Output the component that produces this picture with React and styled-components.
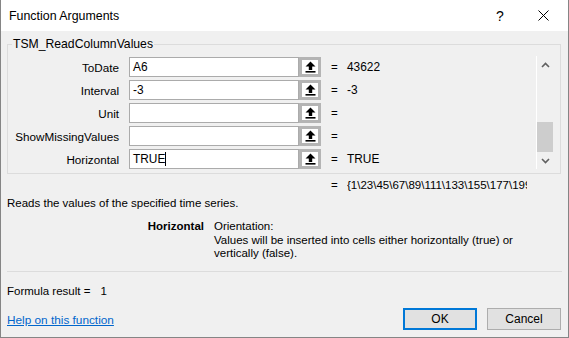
import styled, { createGlobalStyle } from "styled-components";

const GlobalStyle = createGlobalStyle`
  html, body {
    margin: 0;
    padding: 0;
    background: #ffffff;
  }
  body {
    font-family: "Liberation Sans", Arial, sans-serif;
    font-size: 11.5px;
    color: #000;
  }
`;

const args = [
  { name: "ToDate", value: "A6", result: "43622" },
  { name: "Interval", value: "-3", result: "-3" },
  { name: "Unit", value: "", result: "" },
  { name: "ShowMissingValues", value: "", result: "" },
  { name: "Horizontal", value: "TRUE", result: "TRUE", caret: true },
];

export default function App() {
  return (
    <>
      <GlobalStyle />
      <Window>
        <TitleBar>
          <Title>Function Arguments</Title>
          <HelpGlyph>?</HelpGlyph>
          <CloseButton>
            <svg width="11" height="11" viewBox="0 0 11 11">
              <path d="M0.5 0.5 L10.5 10.5 M10.5 0.5 L0.5 10.5" stroke="#000" strokeWidth="1" />
            </svg>
          </CloseButton>
        </TitleBar>

        <Body>
          <Group>
            <Legend>TSM_ReadColumnValues</Legend>
            <GroupInner>
              <Rows>
                {args.map((arg) => (
                  <Row key={arg.name}>
                    <ArgLabel>{arg.name}</ArgLabel>
                    <ArgInput>
                      {arg.value}
                      {arg.caret && <Caret />}
                    </ArgInput>
                    <CollapseButton>
                      <svg width="11" height="12" viewBox="0 0 11 12">
                        <path d="M5.5 0.5 L10.5 5.5 H7.2 V9 H3.8 V5.5 H0.5 Z" fill="#000" />
                        <rect x="0.5" y="10" width="10" height="1.6" fill="#000" />
                      </svg>
                    </CollapseButton>
                    <Equals>=</Equals>
                    <ArgResult>{arg.result}</ArgResult>
                  </Row>
                ))}
              </Rows>
              <ScrollBar>
                <Chevron>
                  <svg width="9" height="6" viewBox="0 0 9 6">
                    <path d="M1 5 L4.5 1.5 L8 5" stroke="#606060" strokeWidth="1.6" fill="none" />
                  </svg>
                </Chevron>
                <Track>
                  <Thumb />
                </Track>
                <Chevron>
                  <svg width="9" height="6" viewBox="0 0 9 6">
                    <path d="M1 1 L4.5 4.5 L8 1" stroke="#606060" strokeWidth="1.6" fill="none" />
                  </svg>
                </Chevron>
              </ScrollBar>
            </GroupInner>
          </Group>

          <ResultLine>
            <Equals>=</Equals>
            <ResultValue>{"{1\\23\\45\\67\\89\\111\\133\\155\\177\\199\\221\\243}"}</ResultValue>
          </ResultLine>

          <Description>Reads the values of the specified time series.</Description>

          <ParamHelp>
            <ParamName>Horizontal</ParamName>
            <ParamText>
              <span>Orientation:</span>
              <span>Values will be inserted into cells either horizontally (true) or</span>
              <span>vertically (false).</span>
            </ParamText>
          </ParamHelp>

          <Separator />

          <FormulaResult>
            Formula result =<FormulaValue>1</FormulaValue>
          </FormulaResult>

          <Footer>
            <HelpLink href="#">Help on this function</HelpLink>
            <Buttons>
              <DialogButton $primary>OK</DialogButton>
              <DialogButton>Cancel</DialogButton>
            </Buttons>
          </Footer>
        </Body>
      </Window>
    </>
  );
}

const Window = styled.div`
  width: 569px;
  height: 338px;
  box-sizing: border-box;
  border: 1px solid #858585;
  border-top: none;
  background: #f0f0f0;
  display: flex;
  flex-direction: column;
  overflow: hidden;
`;

const TitleBar = styled.div`
  height: 31px;
  background: #ffffff;
  display: flex;
  align-items: center;
  flex-shrink: 0;
`;

const Title = styled.div`
  flex: 1;
  padding-left: 8px;
  font-size: 12.4px;
`;

const HelpGlyph = styled.div`
  width: 14px;
  text-align: center;
  font-size: 14px;
  margin-right: 31px;
`;

const CloseButton = styled.div`
  width: 11px;
  height: 11px;
  display: flex;
  margin-right: 19px;
`;

const Body = styled.div`
  flex: 1;
  padding: 0 7px 0 6px;
  display: flex;
  flex-direction: column;
`;

const Group = styled.fieldset`
  margin: 6px 0 0 0;
  padding: 5px 7px 4px 0;
  border: 1px solid #dcdcdc;
  min-width: 0;
`;

const Legend = styled.legend`
  margin-left: 4px;
  padding: 0 1px;
  line-height: 14px;
  font-size: 12.2px;
`;

const GroupInner = styled.div`
  display: flex;
`;

const Rows = styled.div`
  flex: 1;
  display: flex;
  flex-direction: column;
  gap: 3px;
  padding-top: 1px;
`;

const Row = styled.div`
  display: flex;
  align-items: center;
  height: 20px;
`;

const ArgLabel = styled.div`
  width: 111px;
  text-align: right;
  font-size: 11.7px;
`;

const ArgInput = styled.div`
  width: 170px;
  height: 20px;
  box-sizing: border-box;
  margin-left: 10px;
  border: 1px solid #ababab;
  background: #ffffff;
  padding-left: 3px;
  display: flex;
  align-items: center;
  font-size: 11.9px;
`;

const Caret = styled.span`
  display: inline-block;
  width: 1px;
  height: 14px;
  background: #000;
`;

const CollapseButton = styled.div`
  width: 22px;
  height: 20px;
  box-sizing: border-box;
  border: 3px solid #b4b4b4;
  background: #ffffff;
  display: flex;
  align-items: center;
  justify-content: center;
`;

const Equals = styled.div`
  width: 16px;
  margin-left: 10px;
  flex-shrink: 0;
`;

const ArgResult = styled.div`
  font-size: 11.9px;
`;

const ScrollBar = styled.div`
  width: 16px;
  border-left: 1px solid #ffffff;
  display: flex;
  flex-direction: column;
  align-items: stretch;
`;

const Chevron = styled.div`
  height: 17px;
  display: flex;
  align-items: center;
  justify-content: center;
`;

const Track = styled.div`
  flex: 1;
  display: flex;
  flex-direction: column;
  justify-content: flex-end;
`;

const Thumb = styled.div`
  height: 30px;
  background: #cdcdcd;
`;

const ResultLine = styled.div`
  display: flex;
  margin-top: 4px;
  padding-left: 314px;
  line-height: 14px;
`;

const ResultValue = styled.div`
  width: 180px;
  white-space: nowrap;
  overflow: hidden;
`;

const Description = styled.div`
  margin-top: 4px;
  line-height: 14px;
`;

const ParamHelp = styled.div`
  display: flex;
  margin-top: 10px;
  line-height: 13.5px;
`;

const ParamName = styled.div`
  width: 197px;
  text-align: right;
  font-weight: bold;
  flex-shrink: 0;
`;

const ParamText = styled.div`
  margin-left: 10px;
  display: flex;
  flex-direction: column;
`;

const Separator = styled.div`
  height: 1px;
  background: #dcdcdc;
  margin-top: 10px;
  margin-right: -1px;
`;

const FormulaResult = styled.div`
  margin-top: 12px;
  line-height: 14px;
`;

const FormulaValue = styled.span`
  margin-left: 10px;
`;

const Footer = styled.div`
  display: flex;
  align-items: center;
  justify-content: space-between;
  margin-top: 10px;
`;

const HelpLink = styled.a`
  color: #0066cc;
  text-decoration: underline;
  font-size: 11.8px;
  margin-top: 2px;
`;

const Buttons = styled.div`
  display: flex;
  gap: 10px;
`;

const DialogButton = styled.button`
  width: 74px;
  height: 22px;
  box-sizing: border-box;
  background: #e1e1e1;
  border: ${(p) => (p.$primary ? "2px solid #0078d7" : "1px solid #adadad")};
  font-family: inherit;
  font-size: 12px;
  color: #000;
  padding: 0;
`;
